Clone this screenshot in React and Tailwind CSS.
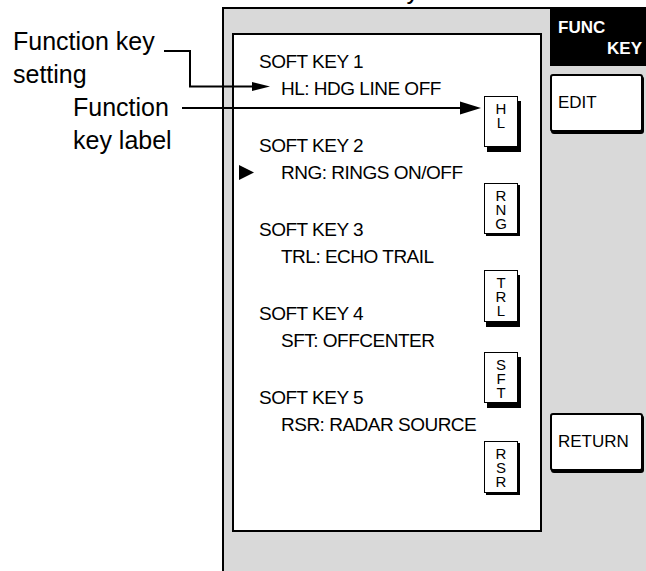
import React from "react";

const softKeys = [
  { title: "SOFT KEY 1", item: "HL: HDG LINE OFF", label: "HL", box: "mt-[61px] h-[51px] shadow-[3px_5px_0_#000]" },
  { title: "SOFT KEY 2", item: "RNG: RINGS ON/OFF", label: "RNG", active: true, box: "mt-[36px] h-[51px] shadow-[2px_2px_0_#000]" },
  { title: "SOFT KEY 3", item: "TRL: ECHO TRAIL", label: "TRL", box: "mt-[36px] h-[52px] shadow-[2px_5px_0_#000]" },
  { title: "SOFT KEY 4", item: "SFT: OFFCENTER", label: "SFT", box: "mt-[30px] h-[51px] shadow-[3px_5px_0_#000]" },
  { title: "SOFT KEY 5", item: "RSR: RADAR SOURCE", label: "RSR", box: "mt-[38px] h-[52px] shadow-[2px_2px_0_#000]" },
];

const Cursor = () => (
  <svg width="15" height="15" viewBox="0 0 15 15">
    <polygon points="0,0 15,7.5 0,15" fill="#000" />
  </svg>
);

const SideButton = ({ label, className = "" }) => (
  <div
    className={`w-[93px] h-[58px] border-2 border-black rounded-[3px] bg-white shadow-[1px_2px_0_#000] flex items-center pl-[6px] text-[17px] ${className}`}
  >
    {label}
  </div>
);

export default function App() {
  return (
    <div className="relative w-[646px] h-[571px] bg-white overflow-hidden flex flex-col text-black font-['Liberation_Sans',Arial,sans-serif]">
      {/* tail of a caption cut off by the top edge */}
      <div className="h-[7px] overflow-hidden shrink-0">
        <div className="pl-[380px] -mt-[26px] text-[25px] leading-[33px]">key</div>
      </div>

      <div className="flex flex-1 min-h-0">
        {/* callout labels */}
        <div className="w-[222px] pt-[18px] text-[25px] leading-[33px]">
          <div className="pl-[13px]">
            <div>Function key</div>
            <div>setting</div>
          </div>
          <div className="pl-[73px]">
            <div>Function</div>
            <div>key label</div>
          </div>
        </div>

        {/* display frame */}
        <div className="flex-1 flex border-l-2 border-t-2 border-black bg-[#d9d9d9]">
          <div className="ml-[8px] mt-[24px] w-[310px] h-[499px] border-2 border-black bg-white flex">
            <div className="w-[250px] pt-[13px] pl-[5px] text-[19px] tracking-[-0.5px]">
              {softKeys.map((k) => (
                <div key={k.title} className="mb-[30px]">
                  <div className="pl-[20px] h-[27px] leading-[27px]">{k.title}</div>
                  <div className="flex items-center h-[27px] leading-[27px]">
                    <div className="w-[42px] flex items-center">{k.active && <Cursor />}</div>
                    <span>{k.item}</span>
                  </div>
                </div>
              ))}
            </div>
            <div className="w-[34px] flex flex-col">
              {softKeys.map((k) => (
                <div
                  key={k.label}
                  className={`w-[34px] border border-black bg-white flex flex-col items-center pt-[5px] text-[15px] leading-[14px] ${k.box}`}
                >
                  {k.label.split("").map((c, i) => (
                    <span key={i}>{c}</span>
                  ))}
                </div>
              ))}
            </div>
          </div>

          <div className="ml-[8px] w-[96px] flex flex-col">
            <div className="h-[57px] bg-black text-white font-bold text-[17px] leading-[21px] pt-[8px]">
              <div className="pl-[8px]">FUNC</div>
              <div className="text-right pr-[4px]">KEY</div>
            </div>
            <SideButton label="EDIT" className="mt-[8px]" />
            <SideButton label="RETURN" className="mt-[281px]" />
          </div>
        </div>
      </div>

      {/* leader lines */}
      <svg className="absolute inset-0 pointer-events-none" width="646" height="571" viewBox="0 0 646 571">
        <polyline points="164,51 190,51 190,86.5 256,86.5" fill="none" stroke="#000" strokeWidth="2" />
        <polygon points="252,82 270,86.5 252,91" fill="#000" />
        <line x1="182" y1="108" x2="464" y2="108" stroke="#000" strokeWidth="2" />
        <polygon points="460,101.5 481,108 460,114.5" fill="#000" />
      </svg>
    </div>
  );
}
